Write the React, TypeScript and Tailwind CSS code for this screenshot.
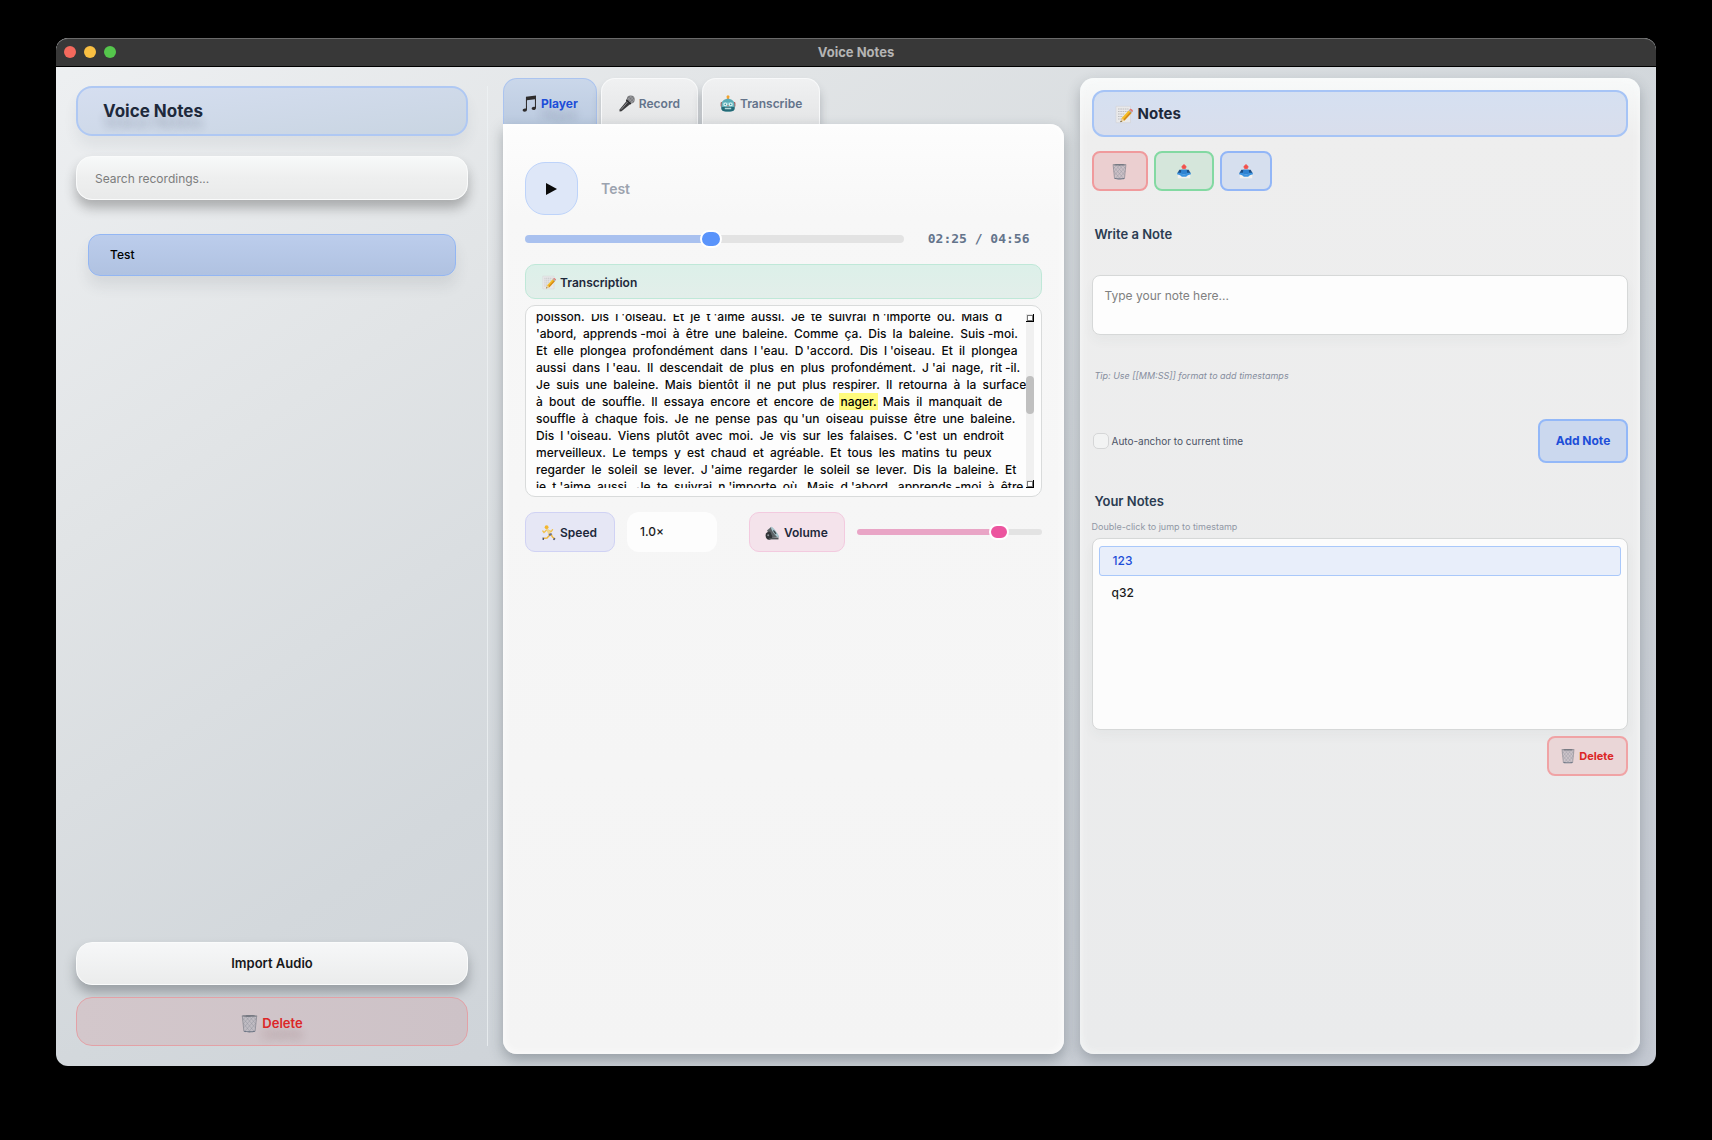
import { ReactNode } from "react";

const TRANSCRIPT = [
  "poisson. Dis l|'oiseau. Et je t|'aime aussi. Je te suivrai n|'importe où. Mais d",
  "'abord, apprends|-moi à être une baleine. Comme ça. Dis la baleine. Suis|-moi.",
  "Et elle plongea profondément dans l|'eau. D|'accord. Dis l|'oiseau. Et il plongea",
  "aussi dans l|'eau. Il descendait de plus en plus profondément. J|'ai nage, rit|-il.",
  "Je suis une baleine. Mais bientôt il ne put plus respirer. Il retourna à la surface",
  "à bout de souffle. Il essaya encore et encore de *nager. Mais il manquait de",
  "souffle à chaque fois. Je ne pense pas qu|'un oiseau puisse être une baleine.",
  "Dis l|'oiseau. Viens plutôt avec moi. Je vis sur les falaises. C|'est un endroit",
  "merveilleux. Le temps y est chaud et agréable. Et tous les matins tu peux",
  "regarder le soleil se lever. J|'aime regarder le soleil se lever. Dis la baleine. Et",
  "je t|'aime aussi. Je te suivrai n|'importe où. Mais d|'abord, apprends|-moi à être",
];

function Token({ text }: { text: string }) {
  const active = text.startsWith("*");
  return (
    <span className={active ? "bg-[#fffb7d] py-px pl-[2px] pr-px text-black" : "pl-[2px] pr-px"}>
      {active ? text.slice(1) : text}
    </span>
  );
}

function Line({ text }: { text: string }) {
  const out: ReactNode[] = [];
  text.split(" ").forEach((word, i) => {
    if (i > 0) out.push(" ");
    word.split("|").forEach((part, j) => out.push(<Token key={`${i}-${j}`} text={part} />));
  });
  return <p className="whitespace-nowrap">{out}</p>;
}

function MusicIcon() {
  return (
    <svg viewBox="0 0 16 18" className="h-[17px] w-[15px] shrink-0" aria-hidden="true">
      <path d="M4.2 1.9 14.9.5v13.2c0 1.3-1.1 2.2-2.6 2.2-1.2 0-2-.6-2-1.5 0-1.200 1.200-2 2.500-2 .4 0 .7.1 1 .2V4.400L5.300 5.600v10c0 1.200-1.100 2.100-2.600 2.100-1.200 0-2-.6-2-1.500 0-1.200 1.200-2 2.500-2 .4 0 .7.1 1 .2z" fill="#2e2c2c" />
    </svg>
  );
}

function MicIcon() {
  return (
    <svg viewBox="0 0 16 17" className="h-[17px] w-4 shrink-0" aria-hidden="true">
      <path d="M8.400 5 12 8.500 2.500 16.200 .6 16.600.4 14.700z" fill="#3b3b3d" />
      <path d="M8.600 7 2 14.600" stroke="#9a9a9c" strokeWidth=".9" />
      <circle cx="11.700" cy="4.500" r="4" fill="#77787b" />
      <path d="m8.800 2.600 5.200 5.200M10.800 1.200l4.400 4.300M8 5l3.500 3.300M14.500 2 9.700 7M12.500 1 8.500 5M15.300 4.500 12 8" stroke="#b6b7ba" strokeWidth=".5" />
      <path d="m7.600 4.200 4.800 4.500-1.100.8-4.400-4z" fill="#232325" />
    </svg>
  );
}

function RobotIcon() {
  return (
    <svg viewBox="0 0 16 17" className="h-[17px] w-4 shrink-0" aria-hidden="true">
      <circle cx="8" cy="1.800" r="1.500" fill="#f1a32c" />
      <path d="M6.800 3.200h2.400V5H6.800z" fill="#c08a3a" />
      <rect x=".6" y="7" width="2.200" height="5" rx="1" fill="#b7524e" />
      <rect x="13.200" y="7" width="2.200" height="5" rx="1" fill="#b7524e" />
      <path d="M1.400 9.500C1.400 6 4.200 4 8 4s6.600 2 6.600 5.500v3.600c0 2.400-2.200 3.500-6.600 3.500s-6.600-1.100-6.600-3.500z" fill="#58abb6" />
      <path d="M1.400 12h13.200v1.400c0 2.300-2.200 3.200-6.600 3.200s-6.600-.9-6.600-3.200z" fill="#246a77" />
      <path d="M2.600 7.600h10.800v3.600H2.600z" fill="#85c9d0" />
      <circle cx="5.300" cy="9.400" r="1.800" fill="#e0f4f4" />
      <circle cx="10.700" cy="9.400" r="1.800" fill="#e0f4f4" />
      <circle cx="5.300" cy="9.400" r=".8" fill="#3f98a5" />
      <circle cx="10.700" cy="9.400" r=".8" fill="#3f98a5" />
      <path d="m8 9.800.9 1.500H7.100z" fill="#d75245" />
      <path d="M4.800 12.800h6.400v1.500H4.800z" fill="#b5d8da" />
    </svg>
  );
}

function MemoIcon({ className }: { className: string }) {
  return (
    <svg viewBox="0 0 18 18" className={className} aria-hidden="true">
      <path d="M1 .8h14.500v16.400H1z" fill="#e9e9ea" stroke="#cfcfd2" strokeWidth=".5" />
      <path d="M3 3.500h10.500M3 6h10.500M3 8.500h7M3 11h5M3 13.500h4" stroke="#b0b0b4" strokeWidth=".8" strokeDasharray="1.600 .7" />
      <path d="m6.700 12.600 7-7.700 2.800 2.500-7 7.700-3.900 1.500z" fill="#f5bd25" />
      <path d="m8.300 13.900 7-7.700 1.200 1.200-7 7.700z" fill="#d48a1c" />
      <path d="m6.700 12.600 2.800 2.500-3.900 1.500z" fill="#e9cfa0" />
      <path d="m6 15 .9.900-1.700.8z" fill="#3a332c" />
      <path d="m13.700 4.900.8-.9 2.800 2.500-.8.900z" fill="#a7a7ab" />
      <path d="m14.500 4 .7-.7c.8-.7 3.300 1.600 2.700 2.500l-.6.7z" fill="#e5766f" />
    </svg>
  );
}

function TrashIcon({ className }: { className: string }) {
  return (
    <svg viewBox="0 0 16 18" className={className} aria-hidden="true">
      <path d="M1.200 2h13.600l-1.500 14.500c-.1.700-10.500.7-10.600 0z" fill="#b3b5bd" fillOpacity=".55" />
      <path d="m1.700 4 10.800 12.500M2.300 9l6.500 8M4.500 2.500 13.300 13M8 2.500l6 7M11.500 2.500 14.500 6M14.300 4 3.500 16.500M13.700 9l-6.500 8M11.500 2.500 2.700 13M8 2.500l-6 7M4.500 2.500 1.500 6" stroke="#8f919b" strokeWidth=".4" fill="none" />
      <path d="m1.200 2 1.500 14.500M14.800 2l-1.500 14.500" stroke="#83858e" strokeWidth=".7" />
      <path d="M.6 1.900c0-1.200 14.800-1.200 14.800 0S.6 3.100.6 1.900z" fill="#777a83" />
      <path d="M2.800 15.900c3 .7 7.400.7 10.400 0l-.1 1c-2.500.7-7.700.7-10.200 0z" fill="#6a7382" />
    </svg>
  );
}

function OutboxIcon() {
  return (
    <svg viewBox="0 0 14 15" className="h-[15px] w-3.5" aria-hidden="true">
      <path d="M.8 9h12.400v5.200H.8z" fill="#f3f1ee" />
      <path d="M2.300 5.700h9.400L13.800 9.500H.2z" fill="#1d4f86" />
      <path d="M.3 8.800h3.900c.3 1.100 1.300 1.500 2.800 1.500s2.500-.4 2.800-1.500h3.900v1.700c-2 .4-3.700 1-4.500 2.300H4.800C4 11.500 2.300 10.900.3 10.500z" fill="#3b93e0" />
      <path d="M4.300 5.700h5.400l.4 3.400c-.5.900-1.500 1.200-3.100 1.200s-2.600-.3-3.100-1.200z" fill="#2f83d2" />
      <path d="M7 .5 9.200 2.600 8.400 4.500H5.600L4.800 2.600z" fill="#f2504b" stroke="#f2504b" strokeWidth=".8" strokeLinejoin="round" />
    </svg>
  );
}

function RunnerIcon() {
  return (
    <svg viewBox="0 0 14 16" className="h-4 w-3.5 shrink-0" aria-hidden="true">
      <circle cx="4.600" cy="2.200" r="1.900" fill="#f3b72f" />
      <path d="M4.600 5 2 7.500.8 6M5.500 5.500l3.800 1L10.500 4.600" stroke="#f2c14a" strokeWidth="1.300" fill="none" strokeLinecap="round" />
      <path d="m4.200 4.600 2.200-.5 2.900 4.200-2.500 2z" fill="#f1d58a" />
      <path d="m6.600 9 2.700-1 1 2-3 1.200z" fill="#6b6f86" />
      <path d="M7.300 10.500 5 13l-3.200.2M9.300 9.800l1.200 2.200 2 1.600" stroke="#f0b63a" strokeWidth="1.400" fill="none" />
      <path d="m.5 12.600 1.600.1-.2 2.200L.6 15zM11.900 12.800l1.700 1-1.500 1.500-1-.5z" fill="#4f5468" />
    </svg>
  );
}

function SpeakerIcon() {
  return (
    <svg viewBox="0 0 15 15" className="h-[15px] w-[15px] shrink-0" aria-hidden="true">
      <path d="M2 4.500 6 .9c.8-.5 8.300 8.900 7.800 10.600L6.500 12z" fill="#5d6367" />
      <path d="M6 .9c1.500-1 9 9 7.800 10.600C12.300 12.800 4.700 2.400 6 .9z" fill="#a9c6cd" />
      <path d="M8.200 3.900c1.200 0 3.600 3.300 3.100 4.200-1 .7-3.500-2.900-3.100-4.200z" fill="#3f474b" />
      <path d="M1 7.500c.9-1.600 2.700-2.200 4.300-1.700l2 4.700c-.3 1.700-1.500 3-3.200 3.300C1.500 13.900-.2 10.500 1 7.500z" fill="#303437" />
      <circle cx="3.200" cy="9.300" r="1" fill="#8b9296" />
      <path d="M4 12h9.500v1.400H4z" fill="#4d5255" />
    </svg>
  );
}

const tabBase =
  "flex h-[46px] items-center gap-1 rounded-t-[14px] border border-b-0 pt-1 text-xs";
const tabIdle =
  "border-[#f8f9fa] bg-linear-to-b from-[#f0f1f2] to-[#e4e5e6] px-[17px] font-semibold text-[#64748b] shadow-[0_8px_10px_rgba(60,70,80,0.3)]";
const thumb =
  "[&::-webkit-slider-thumb]:h-[18px] [&::-webkit-slider-thumb]:w-[22px] [&::-webkit-slider-thumb]:appearance-none [&::-webkit-slider-thumb]:rounded-[9px] [&::-webkit-slider-thumb]:border-2 [&::-webkit-slider-thumb]:border-white";

function Sidebar() {
  return (
    <aside className="mt-[19px] mb-5 flex w-[432px] shrink-0 flex-col border-r border-[#f0f3f5]/70 pr-[19px] pl-5">
      <header className="flex h-[50px] items-center rounded-2xl border-2 border-[#afc8f3] bg-linear-to-br from-[#d5def0] to-[#c9d5e2] px-[25px] pt-0.5 shadow-[0_10px_14px_rgba(60,70,80,0.07)]">
        <h1 className="text-[17px] font-bold text-[#1e293b] [text-shadow:0_11px_9px_rgba(30,41,59,0.2)]">Voice Notes</h1>
      </header>
      <input
        type="search"
        aria-label="Search recordings"
        placeholder="Search recordings..."
        className="mt-5 h-11 rounded-2xl border border-[#fafbfb] bg-linear-to-b from-[#f7f9f9] via-[#eeefef] to-[#e9eaea] px-[18px] text-xs text-slate-800 shadow-[0_8px_12px_rgba(50,50,50,0.33)] outline-none placeholder:text-[#7c7d7d]"
      />
      <ul className="mt-[34px] px-3">
        <li>
          <button className="h-[42px] w-full rounded-xl border border-[#93b6f3] bg-linear-to-b from-[#bccdec] to-[#b0c2e1] px-[21px] text-left text-xs font-medium text-black shadow-[0_10px_14px_rgba(60,70,80,0.1)]">
            Test
          </button>
        </li>
      </ul>
      <div className="mt-auto flex flex-col gap-3">
        <button className="h-[43px] rounded-2xl border border-[#fafbfb] bg-linear-to-b from-[#f6f7f8] to-[#ebecec] text-[13px] font-semibold text-[#18181b] shadow-[0_8px_12px_rgba(50,55,60,0.35)]">
          Import Audio
        </button>
        <button className="flex h-[49px] items-center justify-center gap-1 rounded-2xl border border-[#e3a1a6] bg-linear-to-r from-[#d3c7cb] to-[#cdc2c7] pt-1 text-[13px] font-semibold text-[#dc2626] [text-shadow:0_11px_8px_rgba(80,20,20,0.2)]">
          <TrashIcon className="h-[19px] w-[17px]" />
          Delete
        </button>
      </div>
    </aside>
  );
}

function ScrollCap() {
  return (
    <i className="flex h-2 w-2 shrink-0 border-r border-b border-black bg-[#e6e6e6]">
      <i className="mt-px ml-px h-[6px] w-[6px] border border-[#777] bg-white" />
    </i>
  );
}

function Player() {
  return (
    <main className="flex min-w-0 flex-col">
      <div role="tablist" className="flex gap-1">
        <button
          role="tab"
          aria-selected="true"
          className={`${tabBase} border-[#abc4ef] bg-linear-to-b from-[#cad7ea] to-[#bccbe0] px-[18px] font-bold text-[#1d4ed8] [text-shadow:0_11px_8px_rgba(30,41,59,0.2)]`}
        >
          <MusicIcon />
          Player
        </button>
        <button role="tab" aria-selected="false" className={`${tabBase} ${tabIdle}`}>
          <MicIcon />
          Record
        </button>
        <button role="tab" aria-selected="false" className={`${tabBase} ${tabIdle}`}>
          <RobotIcon />
          Transcribe
        </button>
      </div>
      <section className="relative flex flex-1 flex-col rounded-[14px] rounded-tl-none bg-linear-to-b from-[#fdfdfd] via-[#f7f7f7] via-10% to-[#f4f4f4] px-[22px] pt-[38px] shadow-[0_6px_14px_rgba(50,60,70,0.35),inset_0_0_10px_rgba(255,255,255,0.9)]">
        <div className="flex items-center">
          <button aria-label="Play" className="flex h-[53px] w-[53px] items-center justify-center rounded-[20px] border border-[#bdd3fa] bg-[#dee7f8]">
            <svg viewBox="0 0 11 12" className="h-3 w-[11px]" aria-hidden="true">
              <path d="M0 0 11 6 0 12z" fill="#0a0a0a" />
            </svg>
          </button>
          <span className="ml-[23px] text-sm font-semibold text-[#9ca3af]">Test</span>
        </div>
        <div className="mt-4 flex h-4 items-center">
          <input
            type="range"
            aria-label="Position"
            defaultValue={49}
            className={`h-2 min-w-0 flex-1 appearance-none rounded bg-[linear-gradient(to_right,#a9c1ef_49%,#e3e3e3_49%)] ${thumb} [&::-webkit-slider-thumb]:bg-[#5a94fb]`}
          />
          <span className="mr-3 ml-6 font-['DejaVu_Sans_Mono',monospace] text-[13px] font-bold text-[#64748b]">02:25 / 04:56</span>
        </div>
        <h2 className="mt-[17px] flex h-[35px] items-center gap-1 rounded-[10px] border border-[#bfe8d8] bg-linear-to-b from-[#dcf0e9] to-[#e3eeea] px-4 pt-0.5 text-xs font-semibold text-[#1e293b]">
          <MemoIcon className="h-[15px] w-3.5" />
          Transcription
        </h2>
        <div className="mt-1.5 flex h-48 rounded-[10px] border border-[#d9dbdb] bg-[#fdfdfd] py-2 pr-[7px] pl-2">
          <div className="min-w-0 flex-1 overflow-hidden text-xs leading-[17px] font-medium text-[#0a0a0a]">
            <div className="-mt-1.5">
              {TRANSCRIPT.map((l) => (
                <Line key={l} text={l} />
              ))}
            </div>
          </div>
          <div className="flex w-2 flex-col items-center bg-[#f0f0f0]" aria-hidden="true">
            <ScrollCap />
            <i className="mt-[54px] mb-auto h-[38px] w-2 rounded bg-[#c0c0c0]" />
            <ScrollCap />
          </div>
        </div>
        <div className="mt-[15px] flex items-center">
          <label htmlFor="speed" className="flex h-10 w-[90px] items-center gap-1 rounded-[10px] border border-[#d0d2f4] bg-[#e6e7f5] pt-0.5 pl-4 text-xs font-semibold text-[#1e293b]">
            <RunnerIcon />
            Speed
          </label>
          <select id="speed" className="ml-3 h-10 w-[90px] appearance-none rounded-xl bg-[#fdfdfd] px-[13px] text-xs font-medium text-[#1c1c1e]">
            <option>1.0×</option>
          </select>
          <label htmlFor="volume" className="ml-8 flex h-10 w-24 items-center gap-1 rounded-[10px] border border-[#f3cadf] bg-[#f4e3eb] pt-0.5 pl-[15px] text-xs font-semibold text-[#1e293b]">
            <SpeakerIcon />
            Volume
          </label>
          <input
            id="volume"
            type="range"
            defaultValue={80}
            className="ml-3 h-1.5 min-w-0 flex-1 appearance-none rounded bg-[linear-gradient(to_right,#e9a5c6_77%,#e3e3e3_77%)] [&::-webkit-slider-thumb]:h-4 [&::-webkit-slider-thumb]:w-5 [&::-webkit-slider-thumb]:appearance-none [&::-webkit-slider-thumb]:rounded-[8px] [&::-webkit-slider-thumb]:border-2 [&::-webkit-slider-thumb]:border-white [&::-webkit-slider-thumb]:bg-[#ec559f]"
          />
        </div>
      </section>
    </main>
  );
}

function Notes() {
  return (
    <section className="flex min-w-0 flex-col rounded-[14px] bg-linear-to-b from-[#f8fafa] via-[#eeeeee] via-6% to-[#eaebec] p-3 shadow-[0_6px_14px_rgba(50,60,70,0.3),inset_0_0_10px_rgba(250,252,252,0.8)]">
      <h2 className="flex h-[47px] items-center gap-[5px] rounded-xl border-2 border-[#a6c4f6] bg-linear-to-b from-[#d5e0f1] to-[#d9deec] px-[21px] pt-0.5 text-[15px] font-bold text-[#1e293b]">
        <MemoIcon className="h-[19px] w-[18px]" />
        Notes
      </h2>
      <div className="mt-3.5 flex gap-1.5">
        <button aria-label="Clear notes" className="flex h-10 w-14 items-center justify-center rounded-lg border-2 border-[#f09a9c] bg-[#ebcfd0]">
          <TrashIcon className="h-[17px] w-[15px]" />
        </button>
        <button aria-label="Export notes" className="flex h-10 w-[60px] items-center justify-center rounded-lg border-2 border-[#83d9a2] bg-[#d5e6db]">
          <OutboxIcon />
        </button>
        <button aria-label="Share notes" className="flex h-10 w-[52px] items-center justify-center rounded-lg border-2 border-[#92b6f7] bg-[#d6dfee]">
          <OutboxIcon />
        </button>
      </div>
      <label htmlFor="note" className="mt-[33px] pl-[3px] text-[13px] leading-5 font-semibold text-[#2b3c52]">
        Write a Note
      </label>
      <textarea
        id="note"
        placeholder="Type your note here..."
        className="mt-[31px] h-[60px] resize-none rounded-lg border border-[#d6d8d8] bg-[#fdfdfd] px-3 py-3 text-xs text-slate-800 shadow-[0_6px_12px_rgba(60,70,80,0.04)] outline-none placeholder:text-[#808080]"
      />
      <p className="mt-[33px] pl-[3px] text-[9px] leading-4 text-[#868d9e] italic">Tip: Use [[MM:SS]] format to add timestamps</p>
      <div className="mt-[35px] flex h-11 items-center justify-between">
        <label className="flex items-center gap-[3px] pl-px text-[10px] text-[#4b5365]">
          <input type="checkbox" className="h-4 w-4 appearance-none rounded-[5px] border border-[#d5d6d7] bg-[#f2f3f3]" />
          Auto-anchor to current time
        </label>
        <button className="h-11 w-[90px] rounded-lg border-2 border-[#93b8f8] bg-[#cbd8ee] text-xs font-bold text-[#1d4ed8]">Add Note</button>
      </div>
      <h3 className="mt-7 pl-[3px] text-[13px] leading-5 font-semibold text-[#2b3c52]">Your Notes</h3>
      <p className="mt-2 text-[9px] leading-4 text-[#9198a5]">Double-click to jump to timestamp</p>
      <ul className="mt-[3px] flex h-48 flex-col gap-px rounded-lg border border-[#d6d8d8] bg-[#fcfcfc] px-1.5 py-[7px] text-xs font-medium shadow-[0_6px_12px_rgba(60,70,80,0.04)]">
        <li className="flex h-[30px] items-center rounded-[3px] border border-[#a9c8fa] bg-[#e8eefa] px-[13px] text-[#1d4ed8]">123</li>
        <li className="flex h-8 items-center px-[13px] text-[#1c1c1e]">q32</li>
      </ul>
      <button className="mt-1.5 flex h-10 w-[81px] items-center justify-center gap-1 self-end rounded-lg border-2 border-[#f0a3a5] bg-[#ead6d7] text-[11px] font-bold text-[#dc2626]">
        <TrashIcon className="h-4 w-3.5" />
        Delete
      </button>
    </section>
  );
}

export default function App() {
  return (
    <div className="flex h-screen min-h-[900px] flex-col bg-black px-14 pt-[38px] pb-[74px] font-['Inter',sans-serif]">
      <div className="flex flex-1 flex-col overflow-hidden rounded-xl bg-[linear-gradient(to_bottom_right,#eef0f2_0%,#e1e4e6_25%,#d3d8dc_50%,#cbd0d6_75%,#c5cad3_100%)]">
        <div className="grid h-[29px] shrink-0 grid-cols-3 items-center rounded-t-xl border-t border-b border-t-[#6a6a6a] border-b-black bg-[#383838] px-2 pb-0.5">
          <div className="flex gap-2">
            <button aria-label="Close" className="h-3 w-3 rounded-full bg-[#f4695d]" />
            <button aria-label="Minimize" className="h-3 w-3 rounded-full bg-[#f9bf42]" />
            <button aria-label="Zoom" className="h-3 w-3 rounded-full bg-[#55c64c]" />
          </div>
          <span className="text-center text-[13px] leading-5 font-bold text-[#b4b4b4]">Voice Notes</span>
        </div>
        <div className="flex flex-1">
          <Sidebar />
          <div className="grid min-w-0 flex-1 grid-cols-2 gap-4 pt-[11px] pr-4 pb-3 pl-[15px]">
            <Player />
            <Notes />
          </div>
        </div>
      </div>
    </div>
  );
}
